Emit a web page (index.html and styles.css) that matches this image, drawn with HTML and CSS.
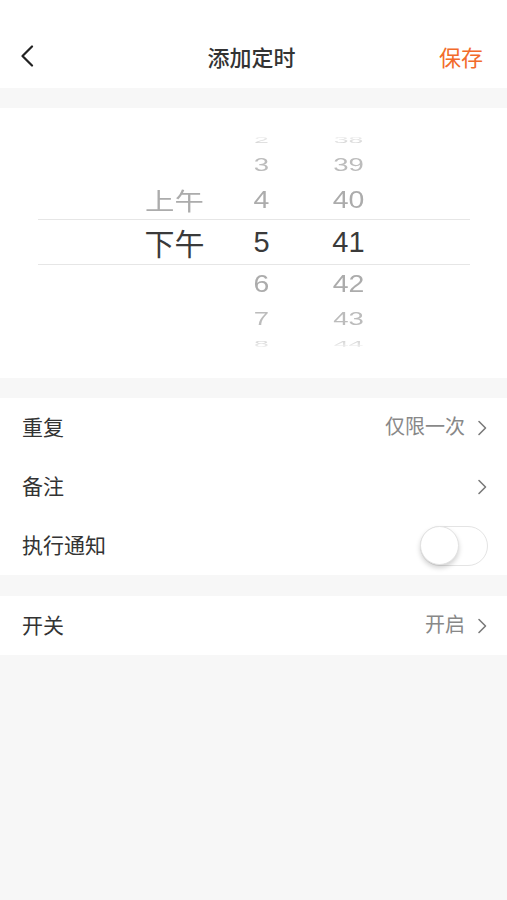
FILE: index.html
```html
<!DOCTYPE html>
<html lang="zh-CN">
<head>
  <meta charset="UTF-8">
  <meta name="viewport" content="width=device-width, initial-scale=1.0">
  <title>添加定时</title>
  <link rel="stylesheet" href="styles.css">
</head>
<body>
  <header class="nav">
    <a class="nav-back" href="#">
      <svg width="14" height="22" viewBox="0 0 14 22"><path d="M12 1.5 L2.5 11 L12 20.5" fill="none" stroke="#222" stroke-width="2.2" stroke-linecap="round" stroke-linejoin="round"/></svg>
    </a>
    <h1 class="nav-title">添加定时</h1>
    <span class="nav-save">保存</span>
  </header>

  <section class="picker">
    <div class="wheel">
      <div class="wheel-row far top"><span></span><span class="num">2</span><span class="num">38</span></div>
      <div class="wheel-row mid"><span></span><span class="num">3</span><span class="num">39</span></div>
      <div class="wheel-row near"><span class="cn">上午</span><span class="num">4</span><span class="num">40</span></div>
      <div class="wheel-row sel"><span class="cn">下午</span><span class="num">5</span><span class="num">41</span></div>
      <div class="wheel-row near"><span></span><span class="num">6</span><span class="num">42</span></div>
      <div class="wheel-row mid"><span></span><span class="num">7</span><span class="num">43</span></div>
      <div class="wheel-row far bottom"><span></span><span class="num">8</span><span class="num">44</span></div>
    </div>
  </section>

  <section class="group">
    <div class="cell">
      <span class="cell-label">重复</span>
      <span class="cell-value">仅限一次</span>
      <svg class="arrow" width="10" height="16" viewBox="0 0 10 16"><path d="M2 1.5 L8.5 8 L2 14.5" fill="none" stroke="#7a7a7a" stroke-width="1.6" stroke-linecap="round" stroke-linejoin="round"/></svg>
    </div>
    <div class="cell">
      <span class="cell-label">备注</span>
      <span class="cell-value"></span>
      <svg class="arrow" width="10" height="16" viewBox="0 0 10 16"><path d="M2 1.5 L8.5 8 L2 14.5" fill="none" stroke="#7a7a7a" stroke-width="1.6" stroke-linecap="round" stroke-linejoin="round"/></svg>
    </div>
    <div class="cell">
      <span class="cell-label">执行通知</span>
      <div class="switch"><div class="knob"></div></div>
    </div>
  </section>

  <section class="group">
    <div class="cell">
      <span class="cell-label">开关</span>
      <span class="cell-value">开启</span>
      <svg class="arrow" width="10" height="16" viewBox="0 0 10 16"><path d="M2 1.5 L8.5 8 L2 14.5" fill="none" stroke="#7a7a7a" stroke-width="1.6" stroke-linecap="round" stroke-linejoin="round"/></svg>
    </div>
  </section>
</body>
</html>
```

FILE: styles.css
```css
body {
  margin: 0;
  padding: 0;
  min-height: 100vh;
  background-color: #f7f7f7;
  font-family: "Noto Sans CJK SC", sans-serif;
  color: #333;
}
.nav {
  height: 88px;
  box-sizing: border-box;
  padding: 38px 24px 14px 20px;
  background-color: #fff;
  display: grid;
  grid-template-columns: 1fr auto 1fr;
  align-items: center;
}
.nav-back {
  display: flex;
  height: 36px;
  align-items: center;
}
.nav-title {
  margin: 0;
  font-size: 22px;
  font-weight: 500;
  line-height: 36px;
  color: #333;
}
.nav-save {
  justify-self: end;
  font-size: 22px;
  line-height: 36px;
  color: #f26b2b;
}
.picker {
  margin-top: 20px;
  height: 270px;
  box-sizing: border-box;
  padding-top: 23px;
  background-color: #fff;
}
.wheel {
  margin: 0 37px 0 38px;
}
.wheel-row {
  display: grid;
  grid-template-columns: 87px 87px 87px;
  padding-left: 93px;
  text-align: center;
}
.wheel-row span {
  display: block;
}
.num {
  font-family: "Liberation Sans", sans-serif;
  font-size: 29px;
}
.cn {
  font-size: 30px;
}
.far {
  height: 18px;
  line-height: 18px;
  color: #d4d4d4;
}
.far span {
  transform: scale(0.92, 0.32);
}
.far.top {
  -webkit-mask-image: linear-gradient(to bottom, transparent 10%, #000 70%);
}
.far.bottom {
  -webkit-mask-image: linear-gradient(to top, transparent 10%, #000 70%);
}
.mid {
  height: 32px;
  line-height: 32px;
  color: #bcbcbc;
}
.mid span {
  transform: scale(0.95, 0.64);
}
.near {
  height: 38px;
  line-height: 38px;
  color: #acacac;
}
.near span {
  transform: scale(0.98, 0.8);
}
.sel {
  height: 46px;
  line-height: 44px;
  box-sizing: border-box;
  border-top: 1px solid #e6e6e6;
  border-bottom: 1px solid #e6e6e6;
  color: #3a3a3a;
}
.group {
  margin-top: 20px;
  background-color: #fff;
}
.group + .group {
  margin-top: 21px;
}
.cell {
  height: 59px;
  box-sizing: border-box;
  padding: 0 20px 4px 22px;
  display: flex;
  align-items: center;
}
.cell-label {
  flex: 1;
  font-size: 21px;
  color: #333;
}
.cell-value {
  font-size: 20px;
  color: #888;
  margin-right: 12px;
}
.arrow {
  display: block;
  margin-top: 4px;
}
.switch {
  width: 68px;
  height: 40px;
  box-sizing: border-box;
  border: 1.5px solid #e4e4e4;
  border-radius: 20px;
  background-color: #fff;
  position: relative;
  margin: 4px -1px 0 0;
}
.knob {
  position: absolute;
  left: -1px;
  top: -1px;
  width: 39px;
  height: 39px;
  box-sizing: border-box;
  border-radius: 50%;
  background-color: #fff;
  border: 1px solid #e2e2e2;
  box-shadow: 0 3px 5px rgba(0, 0, 0, 0.18);
}
```
